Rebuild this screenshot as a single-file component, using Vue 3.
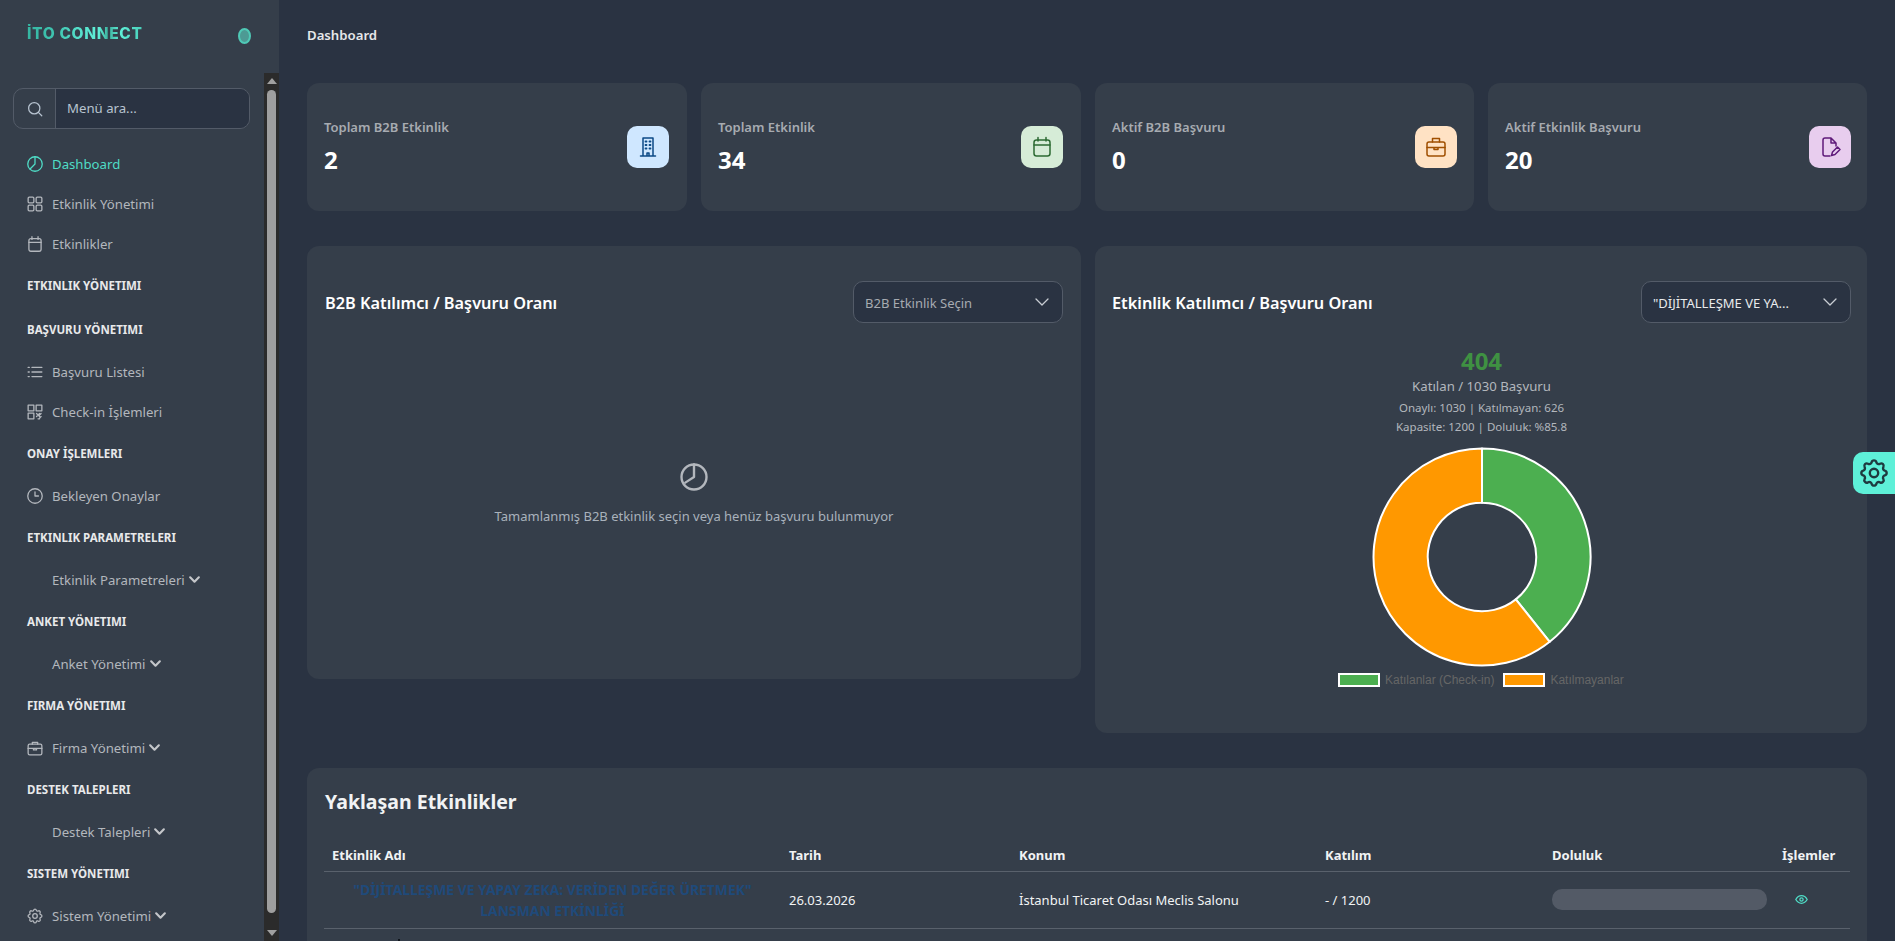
<script setup>
const stats = [
  { label: 'Toplam B2B Etkinlik', value: '2', tone: 'blue', icon: 'building' },
  { label: 'Toplam Etkinlik', value: '34', tone: 'green', icon: 'calendar' },
  { label: 'Aktif B2B Başvuru', value: '0', tone: 'orange', icon: 'case' },
  { label: 'Aktif Etkinlik Başvuru', value: '20', tone: 'purple', icon: 'doc' },
]
const menu = [
  { t: 'item', label: 'Dashboard', icon: 'pie', active: true },
  { t: 'item', label: 'Etkinlik Yönetimi', icon: 'grid' },
  { t: 'item', label: 'Etkinlikler', icon: 'calendar' },
  { t: 'head', label: 'ETKINLIK YÖNETIMI' },
  { t: 'head', label: 'BAŞVURU YÖNETIMI' },
  { t: 'item', label: 'Başvuru Listesi', icon: 'list' },
  { t: 'item', label: 'Check-in İşlemleri', icon: 'qr' },
  { t: 'head', label: 'ONAY İŞLEMLERI' },
  { t: 'item', label: 'Bekleyen Onaylar', icon: 'clock' },
  { t: 'head', label: 'ETKINLIK PARAMETRELERI' },
  { t: 'item', label: 'Etkinlik Parametreleri', chevron: true },
  { t: 'head', label: 'ANKET YÖNETIMI' },
  { t: 'item', label: 'Anket Yönetimi', chevron: true },
  { t: 'head', label: 'FIRMA YÖNETIMI' },
  { t: 'item', label: 'Firma Yönetimi', icon: 'case', chevron: true },
  { t: 'head', label: 'DESTEK TALEPLERI' },
  { t: 'item', label: 'Destek Talepleri', chevron: true },
  { t: 'head', label: 'SISTEM YÖNETIMI' },
  { t: 'item', label: 'Sistem Yönetimi', icon: 'gear', chevron: true },
]
const gearPath = 'M10.3 4.3c.4-1.8 3-1.8 3.4 0a1.7 1.7 0 0 0 2.6 1.1c1.5-.9 3.3.8 2.4 2.4a1.7 1.7 0 0 0 1 2.5c1.8.4 1.8 3 0 3.4a1.7 1.7 0 0 0-1 2.6c.9 1.5-.9 3.3-2.4 2.4a1.7 1.7 0 0 0-2.6 1c-.4 1.8-3 1.8-3.4 0a1.7 1.7 0 0 0-2.6-1c-1.5.9-3.3-.9-2.4-2.4a1.7 1.7 0 0 0-1-2.6c-1.8-.4-1.8-3 0-3.4a1.7 1.7 0 0 0 1-2.5c-.9-1.6.9-3.3 2.4-2.4a1.7 1.7 0 0 0 2.6-1.1z'
</script>

<template>
  <div class="page">
    <aside class="sidebar">
      <div class="brand">
        <span class="logo">İTO CONNECT</span>
        <span class="toggle"></span>
      </div>
      <div class="side-scroll">
        <div class="search">
          <span class="search-icon">
            <svg viewBox="0 0 24 24" class="ico"><circle cx="11" cy="11" r="7.5" /><path d="M16.5 16.5 21 21" /></svg>
          </span>
          <span class="search-input">Menü ara...</span>
        </div>
        <nav class="nav">
          <template v-for="m in menu" :key="m.label">
            <div v-if="m.t === 'head'" class="nav-head">{{ m.label }}</div>
            <div v-else class="nav-item" :class="{ active: m.active }">
              <span class="nav-ico">
                <svg v-if="m.icon" viewBox="1.5 1.5 21 21" class="ico">
                  <template v-if="m.icon === 'pie'"><circle cx="12" cy="12" r="9.5" /><path d="M12 2.5V12l-6.500 6.500" /></template>
                  <template v-else-if="m.icon === 'grid'"><rect x="3" y="3" width="7.500" height="7.500" rx="1.500" /><rect x="13.500" y="3" width="7.500" height="7.500" rx="1.500" /><rect x="3" y="13.500" width="7.500" height="7.500" rx="1.500" /><rect x="13.500" y="13.500" width="7.500" height="7.500" rx="1.500" /></template>
                  <template v-else-if="m.icon === 'calendar'"><rect x="4" y="5" width="16" height="16.500" rx="2.500" /><path d="M4 10h16M8 2.500V6M16 2.500V6" /></template>
                  <template v-else-if="m.icon === 'list'"><path d="M8 6h13M8 12h13M8 18h13M3 6h1.500M3 12h1.500M3 18h1.500" /></template>
                  <template v-else-if="m.icon === 'qr'"><rect x="3" y="3" width="7.500" height="7.500" /><rect x="13.500" y="3" width="7.500" height="7.500" /><rect x="3" y="13.500" width="7.500" height="7.500" /><path d="M14 14l2 2m0 0 2-2m-2 2-2 2m2-2 2 2m2-4-2 2m2 2-2 2m-2 1h2" /></template>
                  <template v-else-if="m.icon === 'clock'"><circle cx="12" cy="12" r="9.500" /><path d="M12 6.500V12h4.500" /></template>
                  <template v-else-if="m.icon === 'case'"><rect x="3" y="7" width="18" height="14" rx="2" /><path d="M8.500 7V4.500h7V7M3 12.500h18M10 12.500v2h4v-2" /></template>
                  <template v-else-if="m.icon === 'gear'"><path :d="gearPath" /><circle cx="12" cy="12" r="3" /></template>
                </svg>
              </span>
              <span>{{ m.label }}</span>
              <svg v-if="m.chevron" viewBox="0 0 12 12" class="chev"><path d="M2 4l4 4 4-4" /></svg>
            </div>
          </template>
        </nav>
        <div class="scrollbar">
          <span class="arrow up"></span>
          <span class="thumb"></span>
          <span class="arrow down"></span>
        </div>
      </div>
    </aside>

    <main class="main">
      <div class="crumb">Dashboard</div>

      <section class="stats">
        <div v-for="s in stats" :key="s.label" class="card stat">
          <div>
            <div class="stat-label">{{ s.label }}</div>
            <div class="stat-value">{{ s.value }}</div>
          </div>
          <div class="stat-icon" :class="s.tone">
            <svg viewBox="0 0 24 24" class="ico">
              <template v-if="s.icon === 'building'"><path d="M7 21V3h10v18M4.500 21h15M11 21v-3h2v3" /><path class="dots" d="M9.500 6.500h1M13.500 6.500h1M9.500 10h1M13.500 10h1M9.500 13.500h1M13.500 13.500h1" /></template>
              <template v-else-if="s.icon === 'calendar'"><rect x="4" y="5" width="16" height="16" rx="2.500" /><path d="M4 10h16M8 2.500V6M16 2.500V6" /></template>
              <template v-else-if="s.icon === 'case'"><rect x="3" y="7" width="18" height="14" rx="2" /><path d="M8.500 7V3.500h7V7M3 12.500h18M10 12.500v2h4v-2" /></template>
              <template v-else><path d="M12 21H7a2 2 0 0 1-2-2V5a2 2 0 0 1 2-2h6l5 5v3M13 3v5h5" /><path d="M13.500 20.500l1-3.500 5-5 2.500 2.500-5 5z" /></template>
            </svg>
          </div>
        </div>
      </section>

      <section class="charts">
        <div class="card chart left">
          <div class="chart-head">
            <h3>B2B Katılımcı / Başvuru Oranı</h3>
            <div class="select muted"><span>B2B Etkinlik Seçin</span><svg viewBox="0 0 16 16" class="sel-chev"><path d="M2 5l6 6 6-6" /></svg></div>
          </div>
          <div class="empty">
            <svg viewBox="0 0 24 24" class="ico empty-ico"><circle cx="12" cy="12" r="10" /><path d="M12 2v10l-7 4.500" /></svg>
            <p>Tamamlanmış B2B etkinlik seçin veya henüz başvuru bulunmuyor</p>
          </div>
        </div>
        <div class="card chart right">
          <div class="chart-head">
            <h3>Etkinlik Katılımcı / Başvuru Oranı</h3>
            <div class="select"><span>"DİJİTALLEŞME VE YA...</span><svg viewBox="0 0 16 16" class="sel-chev"><path d="M2 5l6 6 6-6" /></svg></div>
          </div>
          <div class="summary">
            <div class="big">404</div>
            <div class="sub">Katılan / 1030 Başvuru</div>
            <div class="mini first">Onaylı: 1030 | Katılmayan: 626</div>
            <div class="mini">Kapasite: 1200 | Doluluk: %85.8</div>
          </div>
          <svg class="donut" viewBox="0 0 220 220">
            <path d="M110 1.500A108.500 108.500 0 0 1 177.700 194.800L143.800 152.400A54.250 54.250 0 0 0 110 55.750Z" fill="#4caf50" stroke="#fff" stroke-width="2" stroke-linejoin="round" />
            <path d="M177.700 194.800A108.500 108.500 0 1 1 110 1.500L110 55.750A54.250 54.250 0 1 0 143.800 152.400Z" fill="#ff9800" stroke="#fff" stroke-width="2" stroke-linejoin="round" />
          </svg>
          <div class="legend">
            <span class="swatch g"></span><span class="leg-text">Katılanlar (Check-in)</span>
            <span class="swatch o"></span><span class="leg-text">Katılmayanlar</span>
          </div>
        </div>
      </section>

      <section class="card table-card">
        <h2>Yaklaşan Etkinlikler</h2>
        <table>
          <thead>
            <tr><th class="c1">Etkinlik Adı</th><th class="c2">Tarih</th><th class="c3">Konum</th><th class="c4">Katılım</th><th class="c5">Doluluk</th><th class="c6">İşlemler</th></tr>
          </thead>
          <tbody>
            <tr>
              <td class="name">"DİJİTALLEŞME VE YAPAY ZEKA: VERİDEN DEĞER ÜRETMEK" LANSMAN ETKİNLİĞİ</td>
              <td>26.03.2026</td>
              <td>İstanbul Ticaret Odası Meclis Salonu</td>
              <td>- / 1200</td>
              <td><div class="bar"></div></td>
              <td class="act"><svg viewBox="0 0 24 24" class="eye"><path d="M1.500 12S5.500 5 12 5s10.500 7 10.500 7-4 7-10.500 7S1.500 12 1.500 12z" /><circle cx="12" cy="12" r="3" /></svg></td>
            </tr>
            <tr class="next">
              <td colspan="6"><span class="mark"></span></td>
            </tr>
          </tbody>
        </table>
      </section>
    </main>

    <div class="settings">
      <svg viewBox="2 2 20 20" class="ico"><path :d="gearPath" /><circle cx="12" cy="12" r="3" /></svg>
    </div>
  </div>
</template>

<style>
html, body { margin: 0; height: 100%; overflow: hidden; background: #2a3342; }
</style>

<style scoped>
.page { display: flex; height: 941px; overflow: hidden; background: #2a3342; font-family: "Noto Sans", "Open Sans", sans-serif; color: #fff; position: relative; }
.ico { fill: none; stroke: currentColor; stroke-width: 2; stroke-linecap: round; stroke-linejoin: round; width: 100%; height: 100%; display: block; }

.sidebar { width: 279px; flex: none; background: #353e4a; display: flex; flex-direction: column; height: 941px; }
.brand { height: 73px; flex: none; box-sizing: border-box; padding: 24px 28px 0 27px; display: flex; justify-content: space-between; align-items: flex-start; }
.logo { font: 800 15.500px/20px "Inter", sans-serif; letter-spacing: .65px; color: transparent; background: linear-gradient(90deg, #35b5a2 0%, #3fc4b0 25%, #55e0cb 45%, #5ff0d8 62%, #3cae9c 70%, #5ff0d8 80%, #48cdb8 100%); -webkit-background-clip: text; background-clip: text; }
.toggle { width: 13px; height: 16px; margin-top: 4px; border-radius: 50%; background: #4d9a94; border: 2px solid #4fc9b6; box-sizing: border-box; }
.side-scroll { position: relative; flex: 1; padding: 15px 29px 0 13px; min-height: 0; }
.search { display: flex; height: 41px; border: 1px solid #535b68; border-radius: 10px; overflow: hidden; box-sizing: border-box; }
.search-icon { width: 42px; flex: none; display: flex; align-items: center; justify-content: center; border-right: 1px solid #535b68; color: #b6c2cf; box-sizing: border-box; }
.search-icon .ico { width: 18px; height: 18px; stroke-width: 1.700; }
.search-input { flex: 1; background: #2a3342; font-size: 13.200px; line-height: 39px; padding-left: 11px; color: #b8c4d0; }
.nav { padding: 15px 0 0 14px; }
.nav-item { height: 40px; display: flex; align-items: center; font-size: 13.200px; color: #b3b7bd; }
.nav-item.active { color: #4fdcc6; }
.nav-ico { width: 16px; height: 16px; margin-right: 9px; flex: none; }
.nav-ico .ico { stroke-width: 1.700; }
.nav-head { height: 44px; line-height: 44px; font-size: 11.500px; font-weight: 700; color: #e8e9ea; white-space: nowrap; }
.chev { width: 13px; height: 13px; margin-left: 3px; margin-top: -2px; fill: none; stroke: #c4c6ca; stroke-width: 2; stroke-linecap: round; stroke-linejoin: round; }
.scrollbar { position: absolute; right: 0; top: 0; bottom: 0; width: 15px; background: #2b2b2b; display: flex; flex-direction: column; align-items: center; box-sizing: border-box; padding: 5px 0; }
.arrow { width: 0; height: 0; border-left: 5px solid transparent; border-right: 5px solid transparent; flex: none; }
.arrow.up { border-bottom: 6px solid #a0a0a0; }
.arrow.down { border-top: 6px solid #a0a0a0; }
.thumb { flex: 1; width: 9px; margin: 6px 0 17px; border-radius: 5px; background: #9f9f9f; }

.main { flex: 1; min-width: 0; padding: 0 28px; box-sizing: border-box; }
.crumb { height: 83px; padding-top: 26px; box-sizing: border-box; font-size: 13.200px; font-weight: 600; line-height: 19px; color: #e6e8ea; }
.card { background: #353e4a; border-radius: 12px; }
.stats { display: grid; grid-template-columns: 380px 380px 379px 379px; gap: 14px; }
.stat { height: 128px; box-sizing: border-box; padding: 0 17px; display: flex; align-items: center; justify-content: space-between; }
.stat:nth-child(-n+2) { padding-right: 18px; }
.stat:nth-child(4) { padding-right: 16px; }
.stat-label { font-size: 13px; font-weight: 600; line-height: 19px; color: #a7abb1; margin-bottom: 6px; }
.stat-value { font-size: 24px; font-weight: 700; line-height: 33px; color: #fff; }
.stat-icon { width: 42px; height: 42px; border-radius: 10px; display: flex; align-items: center; justify-content: center; }
.stat-icon .ico { width: 24px; height: 24px; stroke-width: 1.500; }
.stat-icon .dots { stroke-width: 1.800; }
.blue { background: #cfe7ff; color: #0c4a86; }
.green { background: #d6ecd7; color: #2d6a33; }
.orange { background: #ffe2c4; color: #a04f00; }
.purple { background: #e8cdee; color: #5f1a7a; }

.charts { display: grid; grid-template-columns: 774px 772px; gap: 14px; margin-top: 35px; align-items: start; }
.chart { box-sizing: border-box; padding: 0 17px; position: relative; }
.chart.left { height: 433px; padding: 0 18px; }
.chart.right { height: 487px; padding-right: 16px; }
.chart-head { height: 93px; padding-top: 35px; box-sizing: border-box; display: flex; justify-content: space-between; align-items: flex-start; }
h3 { margin: 11px 0 0; font-size: 16.300px; font-weight: 600; line-height: 22px; color: #fff; }
.select { width: 210px; height: 42px; box-sizing: border-box; background: #2a3342; border: 1px solid #535b68; border-radius: 10px; display: flex; align-items: center; justify-content: space-between; padding: 1px 12px 0 11px; font-size: 13px; color: #e9ebed; white-space: nowrap; }
.select .sel-chev { flex: none; }
.select.muted { color: #a7abb1; }
.sel-chev { width: 16px; height: 16px; fill: none; stroke: #c8cdd3; stroke-width: 1.300; stroke-linecap: round; stroke-linejoin: round; margin-top: -2px; }
.empty { display: flex; flex-direction: column; align-items: center; margin-top: 123px; color: #b3b7bd; }
.empty-ico { width: 30px; height: 30px; stroke-width: 1.900; }
.empty p { margin: 15px 0 0; font-size: 13px; line-height: 19px; color: #a9b2bc; }

.summary { text-align: center; margin-top: 5px; }
.big { font-size: 24px; font-weight: 700; line-height: 33px; color: #3f9142; }
.sub { font-size: 13.200px; line-height: 18px; color: #b3b7bd; }
.mini { font-size: 11.500px; line-height: 19px; color: #b3b7bd; }
.mini.first { margin-top: 3px; }
.donut { display: block; width: 220px; height: 220px; margin: 11px auto 0; }
.legend { position: absolute; left: 243px; top: 427px; display: flex; align-items: center; font: 12px/14px "Liberation Sans", Arial, sans-serif; color: #666; }
.swatch { width: 42px; height: 14px; box-sizing: border-box; border: 2px solid #fff; margin-right: 5px; }
.swatch.g { background: #4caf50; }
.swatch.o { background: #ff9800; }
.leg-text { margin-right: 9px; }

.table-card { margin-top: 35px; padding: 0 17px; height: 300px; box-sizing: border-box; position: relative; }
h2 { margin: 0; padding: 21px 0 0 1px; font-size: 19.500px; font-weight: 700; line-height: 26px; color: #f1f3f4; }
table { width: 100%; border-collapse: collapse; table-layout: fixed; margin-top: 24px; }
th { text-align: left; font-size: 13px; font-weight: 700; height: 32px; padding: 0 8px; color: #f1f3f4; border-bottom: 1px solid #59616c; box-sizing: border-box; }
td { font-size: 13px; padding: 0 8px; height: 57px; color: #f1f3f4; border-bottom: 1px solid #59616c; box-sizing: border-box; }
.c1 { width: 457px; }
.c2 { width: 230px; }
.c3 { width: 306px; }
.c4 { width: 227px; }
.c5 { width: 230px; }
td.name { font-size: 13.900px; font-weight: 700; color: #1f4a7a; text-align: center; line-height: 21px; }
.bar { height: 21px; border-radius: 10px; background: #535a66; width: 215px; }
.act { padding-left: 21px; }
.eye { width: 13px; height: 13px; fill: none; stroke: #4fdcc6; stroke-width: 2.400; display: block; }
.next td { vertical-align: top; padding-top: 10px; border-bottom: 0; line-height: 0; }
.mark { display: inline-block; width: 2px; height: 8px; margin-left: 66px; background: #10151c; }

.settings { position: absolute; right: 0; top: 452px; width: 42px; height: 42px; background: #5ef0d8; border-radius: 10px 0 0 10px; color: #1e3a3f; display: flex; align-items: center; justify-content: center; box-sizing: border-box; padding: 7px; }
.settings .ico { stroke-width: 1.700; }
</style>
